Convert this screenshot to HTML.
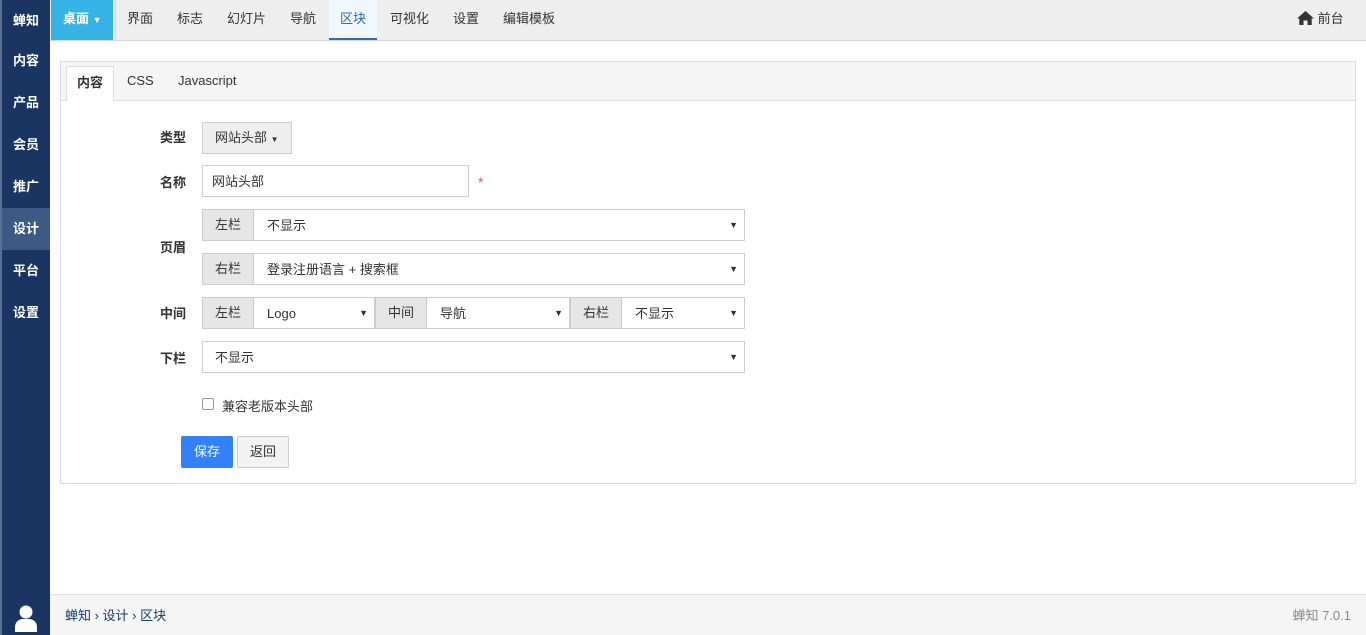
<!DOCTYPE html>
<html><head><meta charset="utf-8"><style>
*{box-sizing:border-box;margin:0;padding:0}
body{width:1366px;height:635px;overflow:hidden;font-family:"Liberation Sans","Noto Sans CJK SC",sans-serif;font-size:13px;color:#333;background:#fff;position:relative}
.side{position:absolute;left:0;top:0;width:50px;height:635px;background:#1b3563;border-left:2px solid #5a6f92}
.side div{position:absolute;left:0;width:48px;height:42px;line-height:42px;text-align:center;color:#fff;font-weight:bold;font-size:13px}
.side .act{background:#3d5a85}
.top{position:absolute;left:50px;top:0;right:0;height:41px;background:#eeeeee;border-bottom:1px solid #d5d5d5}
.top a{position:absolute;top:0;height:40px;line-height:38px;color:#333;font-size:13px}
.desk{left:1px;width:62px;background:#36b3e6;color:#fff!important;font-weight:bold;padding-left:12px}
.panel{position:absolute;left:60px;top:61px;width:1296px;height:423px;border:1px solid #ddd}
.ph{height:39px;background:#f5f5f5;border-bottom:1px solid #ddd;position:relative}
.ph span{position:absolute;top:0;line-height:38px}
.lbl{position:absolute;left:140px;width:46px;text-align:right;font-weight:bold}
.box{position:absolute;border:1px solid #ccc;height:32px;line-height:32px;background:#fff}
.ad{position:absolute;top:0;bottom:0;background:#e6e6e6;border-right:1px solid #ccc;text-align:center;width:51px;line-height:30px}
.arr{position:absolute;right:6px;font-size:9px;line-height:30px}
.foot{position:absolute;left:50px;right:0;top:594px;height:41px;background:#f5f5f5;border-top:1px solid #ddd}
</style></head><body>
<div class="side">
<div style="top:0">蝉知</div><div style="top:40px">内容</div><div style="top:82px">产品</div><div style="top:124px">会员</div><div style="top:166px">推广</div><div class="act" style="top:208px">设计</div><div style="top:250px">平台</div><div style="top:292px">设置</div>
<svg style="position:absolute;left:12px;top:604px" width="24" height="28" viewBox="0 0 24 28"><circle cx="12" cy="8" r="6.5" fill="#fff"/><path d="M1 28v-5c0-5 4-8 8-8h6c4 0 8 3 8 8v5z" fill="#fff"/></svg>
</div>
<div class="top">
<a class="desk">桌面 <span style="font-size:9px">▼</span></a>
<div style="position:absolute;left:65px;top:0;width:1px;height:40px;background:#d5d5d5"></div>
<a style="left:77px">界面</a><a style="left:127px">标志</a><a style="left:177px">幻灯片</a><a style="left:240px">导航</a>
<a style="left:279px;width:48px;text-align:center;background:#f0f7ff;color:#2a6ab8;border-bottom:2px solid #2a6ab8">区块</a>
<a style="left:340px">可视化</a><a style="left:403px">设置</a><a style="left:453px">编辑模板</a>
<a style="left:1247px"><svg width="17" height="14" viewBox="0 0 17 14" style="vertical-align:-2px"><path d="M8.5 0L0 7.5h2.3V14h4.2v-4.5h4V14h4.2V7.5H17z" fill="#333"/></svg> 前台</a>
</div>
<div class="panel">
<div class="ph"><span style="left:5px;top:4px;height:35px;line-height:32px;width:48px;text-align:center;background:#fff;border:1px solid #ddd;border-bottom:none;font-weight:bold">内容</span><span style="left:66px">CSS</span><span style="left:117px">Javascript</span></div>
</div>
<div class="lbl" style="top:127px">类型</div>
<div class="box" style="left:202px;top:122px;width:90px;background:#eee;padding-left:12px;line-height:30px">网站头部 <span style="font-size:8px">▼</span></div>
<div class="lbl" style="top:172px">名称</div>
<div class="box" style="left:202px;top:165px;width:267px;padding-left:9px">网站头部</div>
<div style="position:absolute;left:478px;top:174px;color:#e55;font-size:14px">*</div>
<div class="lbl" style="top:237px">页眉</div>
<div class="box" style="left:202px;top:209px;width:543px"><div class="ad">左栏</div><span style="position:absolute;left:64px">不显示</span><span class="arr">▼</span></div>
<div class="box" style="left:202px;top:253px;width:543px"><div class="ad">右栏</div><span style="position:absolute;left:64px">登录注册语言 + 搜索框</span><span class="arr">▼</span></div>
<div class="lbl" style="top:303px">中间</div>
<div class="box" style="left:202px;top:297px;width:173px"><div class="ad">左栏</div><span style="position:absolute;left:64px">Logo</span><span class="arr">▼</span></div>
<div class="box" style="left:375px;top:297px;width:195px"><div class="ad">中间</div><span style="position:absolute;left:64px">导航</span><span class="arr">▼</span></div>
<div class="box" style="left:570px;top:297px;width:175px"><div class="ad">右栏</div><span style="position:absolute;left:64px">不显示</span><span class="arr">▼</span></div>
<div class="lbl" style="top:348px">下栏</div>
<div class="box" style="left:202px;top:341px;width:543px;padding-left:12px">不显示<span class="arr">▼</span></div>
<div style="position:absolute;left:202px;top:398px;width:12px;height:12px;border:1px solid #999;border-radius:2px;background:#fafafa"></div>
<div style="position:absolute;left:222px;top:396px">兼容老版本头部</div>
<div style="position:absolute;left:181px;top:436px;width:52px;height:32px;line-height:32px;text-align:center;background:#3280fc;color:#fff;border-radius:2px">保存</div>
<div style="position:absolute;left:237px;top:436px;width:52px;height:32px;line-height:30px;text-align:center;background:#f2f2f2;border:1px solid #ccc;border-radius:2px">返回</div>
<div class="foot"><span style="position:absolute;left:15px;top:10px;color:#1a3a6b">蝉知 › 设计 › 区块</span><span style="position:absolute;right:15px;top:10px;color:#888">蝉知 7.0.1</span></div>
</body></html>
